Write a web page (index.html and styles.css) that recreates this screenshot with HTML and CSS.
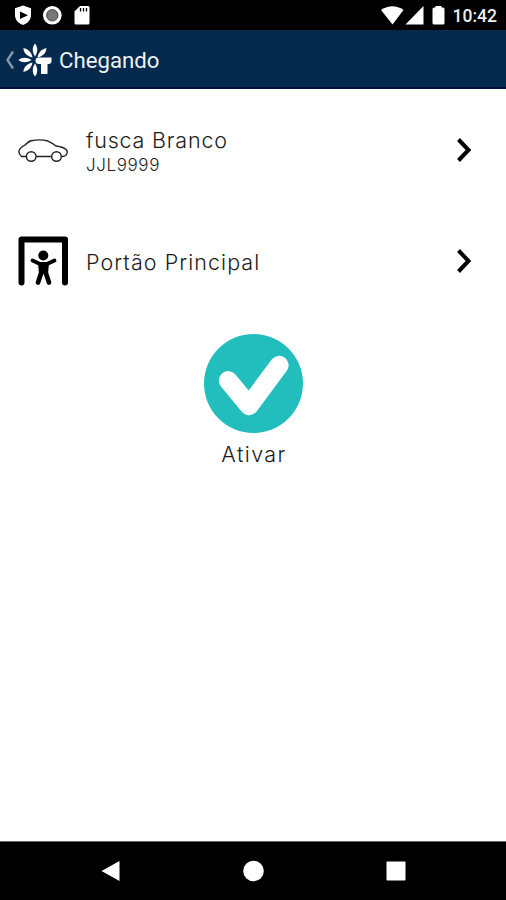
FILE: index.html
```html
<!DOCTYPE html>
<html lang="pt-BR">
  <head>
    <meta charset="UTF-8" />
    <meta name="viewport" content="width=device-width, initial-scale=1.0" />
    <title>Chegando</title>
    <link rel="stylesheet" href="styles.css">
  </head>

  <body>
    <div class="status-bar">
      <svg class="status-left" viewBox="0 0 100 30">
        <path fill="#fff" d="M23 5.500 L31 8.300 V15 C31 20 27.500 23.500 23 25 C18.500 23.500 15 20 15 15 V8.300 Z" />
        <path fill="#000" d="M20 11.500 L28 15.300 L20 19 Z" />
        <circle cx="52.300" cy="15.300" r="9.300" fill="#fff" />
        <circle cx="52.300" cy="15.300" r="5.700" fill="#777" stroke="#444" stroke-width="1" />
        <path fill="#fff" d="M80 6 H88 Q89.500 6 89.500 7.500 V23 Q89.500 24.500 88 24.500 H76 Q74.500 24.500 74.500 23 V11.500 Z" />
        <path stroke="#000" stroke-width="1.300" d="M80.500 8 V11.500 M83.500 8 V11.500 M86.500 8 V11.500" />
      </svg>
      <div class="status-right">
        <svg class="status-icons" viewBox="0 0 66 30">
          <path fill="#fff" d="M0 10 Q11.500 2.500 22.500 10 L11.500 24.500 Z" />
          <path fill="#fff" d="M42.500 6 V24.500 H24.500 Z" />
          <path fill="#fff" d="M54.500 6 H60.500 V7.500 H62 Q63.500 7.500 63.500 9 V23 Q63.500 24.500 62 24.500 H53 Q51.500 24.500 51.500 23 V9 Q51.500 7.500 53 7.500 H54.500 Z" />
        </svg>
        <span class="clock">10:42</span>
      </div>
    </div>

    <header class="header">
      <svg class="logo" viewBox="0 0 56 56">
        <path class="back" d="M13 20.500 L7.500 29 L13 37.500" />
        <g fill="#fff">
          <path id="petal" d="M35 25.500 C32 21 32 16 35 12.500 C38 16 38 21 35 25.500 Z" />
          <use href="#petal" transform="rotate(44 35 29)" />
          <use href="#petal" transform="rotate(-45 35 29)" />
          <use href="#petal" transform="rotate(-90 35 29)" />
          <use href="#petal" transform="rotate(-135 35 29)" />
          <use href="#petal" transform="rotate(180 35 29)" />
          <path d="M39 26.500 H51.500 V30 Q51.500 33 48.500 33 H47.500 V43 H41 V33 H39 Q35.500 33 35.500 29.700 Q35.500 26.500 39 26.500 Z" />
        </g>
      </svg>
      <h1 class="title">Chegando</h1>
    </header>

    <main class="content">
      <div class="row">
        <svg class="row-icon" viewBox="0 0 50 50">
          <g class="car">
            <path d="M8.500 31.500 H3.500 Q0.500 29 1 26 Q1.500 23 7 20 Q10 16.500 13.500 15.700 Q22 14 29 15.700 Q34 18 38 21 Q46 22 48.500 25 Q50 27 48.500 29.500 Q47.500 31.500 43.500 31.500 M18 31.500 H33.500 M11 16 L14 15.700" />
            <circle cx="13.200" cy="31.500" r="4.800" />
            <circle cx="38.500" cy="31.500" r="4.800" />
          </g>
        </svg>
        <div class="row-text">
          <div class="name">fusca Branco</div>
          <div class="plate">JJL9999</div>
        </div>
        <svg class="arrow" viewBox="0 0 16 26"><path d="M2.500 2.500 L12.500 13 L2.500 23.500" /></svg>
      </div>

      <div class="row">
        <svg class="row-icon" viewBox="0 0 50 50">
          <path class="gate" d="M3.500 46.500 V3.500 H47 V46.500" />
          <circle cx="25.300" cy="19.500" r="5" />
          <path class="arms" d="M14.500 24.500 L22 28 H29 L36.500 24.500" />
          <path d="M20 27 Q25.500 29 31 27 L30 38 H21 Z" />
          <path class="legs" d="M23.500 36 L20 46.500 M27.500 36 L31 46.500" />
        </svg>
        <div class="row-text">
          <div class="name gate-name">Portão Principal</div>
        </div>
        <svg class="arrow" viewBox="0 0 16 26"><path d="M2.500 2.500 L12.500 13 L2.500 23.500" /></svg>
      </div>

      <button class="activate">
        <svg class="check" viewBox="0 0 100 100">
          <circle cx="50" cy="50" r="50" />
          <path d="M24.500 47 L45.500 72.500 L76 31.500" />
        </svg>
        <span class="label">Ativar</span>
      </button>
    </main>

    <nav class="nav-bar">
      <svg viewBox="0 0 22 22"><path d="M2.500 11 L20.500 1 V21 Z" /></svg>
      <svg viewBox="0 0 22 22"><circle cx="11.500" cy="11" r="10.300" /></svg>
      <svg viewBox="0 0 22 22"><rect x="1.500" y="1.500" width="19" height="19" rx="1" /></svg>
    </nav>
  </body>
</html>
```
FILE: styles.css
```css
* {
  box-sizing: border-box;
}

body {
  display: flex;
  flex-direction: column;
  height: 100vh;
  margin: 0;
  background-color: #fff;
  font-family: Inter, Arial, sans-serif;
  color: #1c1c1c;
}

.status-bar {
  display: flex;
  justify-content: space-between;
  height: 30px;
  padding-right: 9px;
  background-color: #000;
}

.status-left {
  width: 100px;
  height: 30px;
}

.status-right {
  display: flex;
  gap: 6px;
}

.status-icons {
  width: 66px;
  height: 30px;
}

.clock {
  color: #eee;
  font: 500 17.5px/33px Roboto, sans-serif;
}

.header {
  display: flex;
  align-items: center;
  gap: 3px;
  height: 59px;
  background-color: #062a4d;
  border-bottom: 2px solid #070f3d;
}

.logo {
  width: 56px;
  height: 56px;
}

.back {
  fill: none;
  stroke: #8498ab;
  stroke-width: 2.4;
}

.title {
  margin: 2px 0 0;
  color: #edf1f5;
  font: 400 22.2px/28px Roboto, sans-serif;
}

.content {
  flex: 1;
  padding-top: 5px;
}

.row {
  display: flex;
  align-items: center;
  height: 111px;
  padding: 0 34px 0 18px;
}

.row-icon {
  width: 50px;
  height: 50px;
  margin-right: 18px;
}

.car {
  fill: none;
  stroke: #222;
  stroke-width: 1.4;
}

.gate,
.arms,
.legs {
  fill: none;
  stroke: #000;
  stroke-width: 6;
  stroke-linecap: round;
  stroke-linejoin: round;
}

.arms {
  stroke-width: 3.8;
}

.legs {
  stroke-width: 4.7;
}

.row-text {
  flex: 1;
  padding-top: 2px;
}

.name {
  font-size: 21.5px;
  font-weight: 300;
  line-height: 28px;
  letter-spacing: 0.8px;
}

.gate-name {
  letter-spacing: 1.05px;
}

.plate {
  font-size: 17px;
  font-weight: 300;
  line-height: 22px;
  letter-spacing: 0.6px;
}

.arrow {
  width: 16px;
  height: 26px;
}

.arrow path {
  fill: none;
  stroke: #000;
  stroke-width: 4;
}

.activate {
  display: flex;
  flex-direction: column;
  align-items: center;
  gap: 7px;
  margin: 18px auto 0;
  padding: 0;
  background: none;
  border: none;
  color: inherit;
  font: 300 21.5px/28px Inter, Arial, sans-serif;
  letter-spacing: 1.4px;
}

.label {
  padding-left: 2px;
}

.check {
  width: 99px;
  height: 99px;
}

.check circle {
  fill: #22bebe;
}

.check path {
  fill: none;
  stroke: #fff;
  stroke-width: 19;
  stroke-linecap: round;
  stroke-linejoin: round;
}

.nav-bar {
  display: flex;
  justify-content: center;
  gap: 121px;
  align-items: center;
  height: 59px;
  background-color: #000;
  border-top: 1px solid #666;
}

.nav-bar svg {
  width: 22px;
  height: 22px;
  fill: #fff;
}
```
